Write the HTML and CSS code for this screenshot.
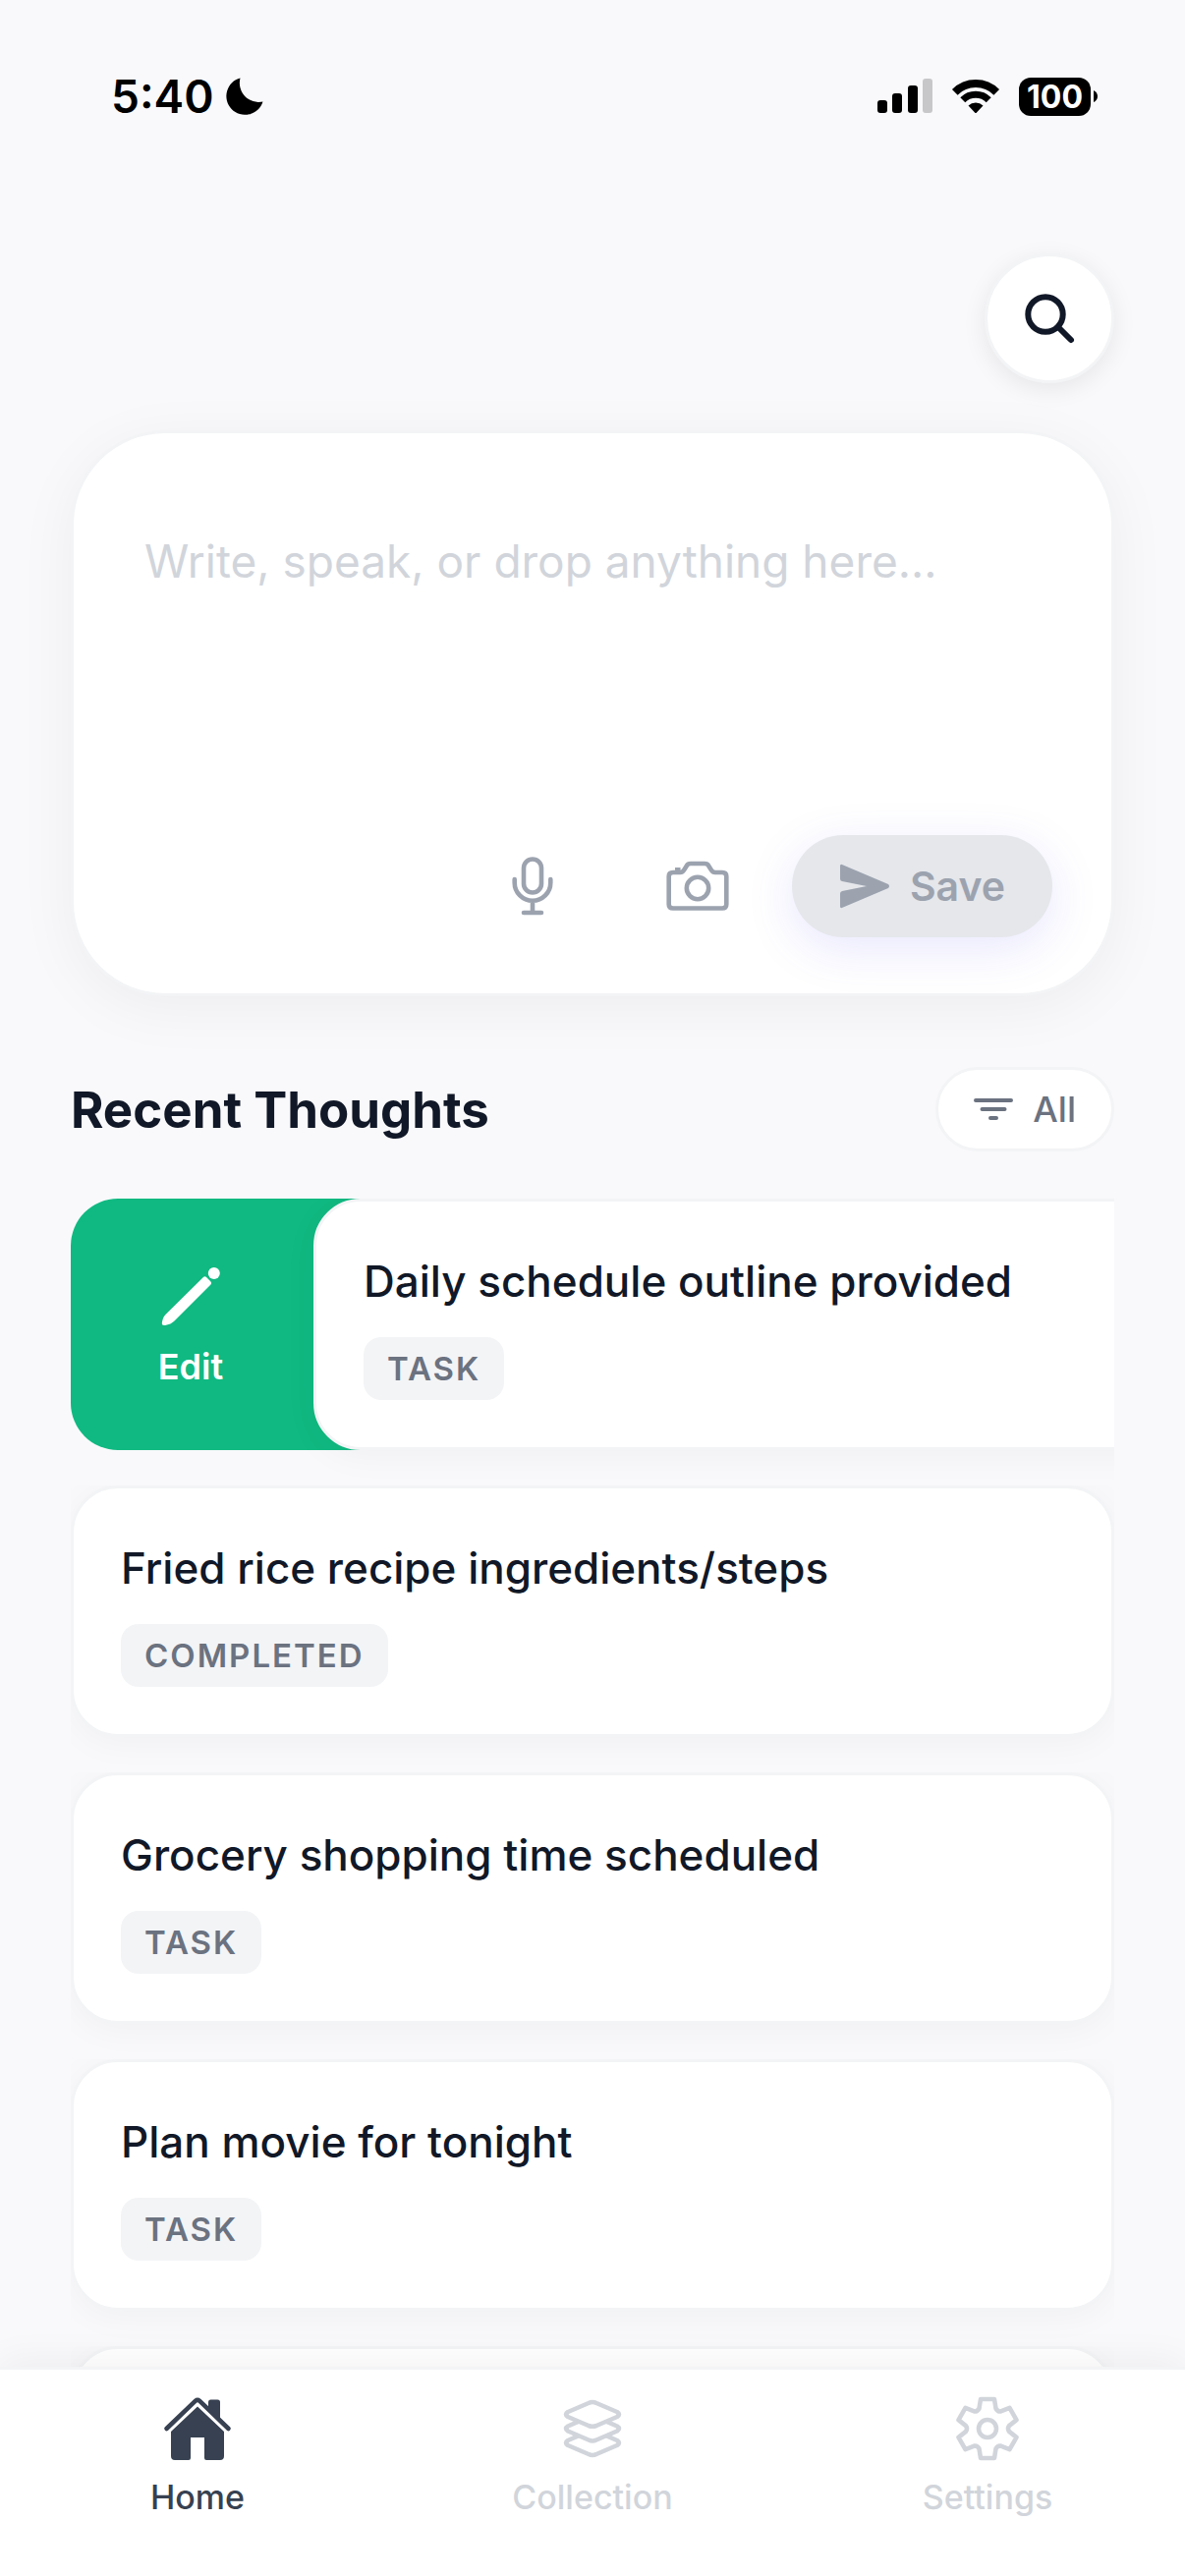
FILE: index.html
```html
<!DOCTYPE html>
<html lang="en">
<head>
    <meta charset="UTF-8">
    <meta name="viewport" content="width=device-width, initial-scale=1.0">
    <title>Thoughts</title>
    <link rel="stylesheet" href="styles.css">
</head>
<body>
    <div class="status-bar">
        <div class="status-left">
            <span class="time">5:40</span>
            <svg class="moon" viewBox="0 0 38 38"><path d="M14.5 .5A19 19 0 1 0 37.5 24.5A19.5 19.5 0 0 1 14.5 .5Z"/></svg>
        </div>
        <div class="status-right">
            <svg class="signal" viewBox="0 0 56 36">
                <rect x="0" y="22" width="10" height="13" rx="3"/>
                <rect x="15" y="15" width="10" height="20" rx="3"/>
                <rect x="31" y="7" width="10" height="28" rx="3"/>
                <rect x="46" y="0" width="10" height="35" rx="3" fill="#c7c7c9"/>
            </svg>
            <svg class="wifi" viewBox="-25 -35 50 36">
                <path d="M-21.2 -21.2A30 30 0 0 1 21.2 -21.2" fill="none" stroke="#000" stroke-width="8"/>
                <path d="M-13.2 -13.2A18.7 18.7 0 0 1 13.2 -13.2" fill="none" stroke="#000" stroke-width="7"/>
                <path d="M-7.5 -7.5A11 11 0 0 1 7.5 -7.5L1 -.5Q0 .5 -1 -.5Z"/>
            </svg>
            <div class="battery">
                <span class="battery-level">100</span>
                <svg class="battery-tip" viewBox="0 0 4 12"><path d="M0 0Q4 2 4 6T0 12Z"/></svg>
            </div>
        </div>
    </div>

    <main class="content">
        <header class="header">
            <button class="search-btn" type="button" aria-label="Search">
                <svg class="icon" viewBox="-36 -36 72 72" fill="none" stroke="#111827" stroke-width="6" stroke-linecap="round">
                    <circle cx="-4" cy="-4" r="17.7"/>
                    <path d="M9.5 9.5L22 22"/>
                </svg>
            </button>
        </header>

        <form class="composer">
            <textarea class="composer-input" aria-label="New thought" placeholder="Write, speak, or drop anything here..."></textarea>
            <div class="composer-actions">
                <button class="icon-btn" type="button" aria-label="Record voice">
                    <svg class="icon" viewBox="-36 -36 72 72" fill="none" stroke="#9ca3af" stroke-width="4.6" stroke-linecap="round">
                        <rect x="-9" y="-27.5" width="18" height="34" rx="9"/>
                        <path d="M-18.3 -7V-3.5A18.3 18.3 0 0 0 18.3 -3.5V-7M0 15V27M-9 27H9"/>
                    </svg>
                </button>
                <button class="icon-btn" type="button" aria-label="Take photo">
                    <svg class="icon" viewBox="-36 -36 72 72" fill="none" stroke="#9ca3af" stroke-width="4.6" stroke-linejoin="round">
                        <path d="M-25 -14H-18Q-15 -14 -13.5 -17L-11 -21Q-10 -23 -7 -23H7Q10 -23 11 -21L13.5 -17Q15 -14 18 -14H25Q29.3 -14 29.3 -10V18.5Q29.3 22.5 25 22.5H-25Q-29.3 22.5 -29.3 18.5V-10Q-29.3 -14 -25 -14Z"/>
                        <path d="M-23 -16.5H-17.5" stroke-width="5"/>
                        <circle cx="0" cy="2" r="11.2"/>
                    </svg>
                </button>
                <button class="save-btn" type="submit">
                    <svg class="send-icon" viewBox="-26 -23 52 46"><path d="M-25 -20.5Q-25 -23 -22.5 -21.8L24 -2Q26 0 24 2L-22.5 21.8Q-25 23 -25 20.5V7.5Q-25 5.5 -23 5L2 0L-23 -5Q-25 -5.5 -25 -7.5Z"/></svg>
                    Save
                </button>
            </div>
        </form>

        <section class="recent">
            <div class="recent-header">
                <h1>Recent Thoughts</h1>
                <button class="filter-btn" type="button">
                    <svg class="filter-icon" viewBox="0 0 40 24" fill="none" stroke="#6b7280" stroke-width="4" stroke-linecap="round">
                        <path d="M2 3H38M8.5 12H31.5M17 21H23"/>
                    </svg>
                    All
                </button>
            </div>

            <ul class="thought-list">
                <li class="thought swiped">
                    <button class="edit-btn" type="button">
                        <svg class="icon" viewBox="-36 -36 72 72" fill="#fff">
                            <circle cx="23.8" cy="-22" r="6"/>
                            <path d="M13.2 -18.2Q14.5 -19.5 15.8 -18.2L20.5 -13.5Q21.8 -12 20.5 -10.500L-16.5 26.500Q-20 30 -26 31Q-30 31.500 -29 27.500Q-28 22 -25 19.500Z"/>
                        </svg>
                        Edit
                    </button>
                    <article class="card">
                        <h2>Daily schedule outline provided</h2>
                        <span class="tag">TASK</span>
                    </article>
                </li>
                <li class="thought">
                    <article class="card">
                        <h2>Fried rice recipe ingredients/steps</h2>
                        <span class="tag">COMPLETED</span>
                    </article>
                </li>
                <li class="thought">
                    <article class="card">
                        <h2>Grocery shopping time scheduled</h2>
                        <span class="tag">TASK</span>
                    </article>
                </li>
                <li class="thought">
                    <article class="card">
                        <h2>Plan movie for tonight</h2>
                        <span class="tag">TASK</span>
                    </article>
                </li>
                <!-- next one peeks out above the tab bar -->
                <li class="thought">
                    <article class="card"></article>
                </li>
            </ul>
        </section>
    </main>

    <nav class="tab-bar">
        <a class="tab active" href="#home">
            <svg class="icon" viewBox="-36 -36 72 72" fill="currentColor">
                <path d="M-31.5 0L-2 -28.3Q0 -30 2 -28.3L31.5 0" fill="none" stroke="currentColor" stroke-width="4.6" stroke-linecap="round"/>
                <path d="M11 -20V-27Q11 -29.5 13.5 -29.5H20.5Q23 -29.5 23 -27V-9Z"/>
                <path d="M0 -22.5L27 3V28Q27 32 23 32H9Q7 32 7 30V9H-7V30Q-7 32 -9 32H-23Q-27 32 -27 28V3Z"/>
            </svg>
            Home
        </a>
        <a class="tab" href="#collection">
            <svg class="icon" viewBox="-36 -36 72 72" fill="none" stroke="currentColor" stroke-width="4.6" stroke-linejoin="round">
                <path d="M-4 -26Q0 -28 4 -26L25 -17Q29 -14.5 25 -12L4 -3Q0 -1.5 -4 -3L-25 -12Q-29 -14.5 -25 -17Z"/>
                <path d="M-14 -7.3L-25 -2.5Q-29 0 -25 2.5L-4 11.5Q0 13.5 4 11.5L25 2.5Q29 0 25 -2.5L14 -7.3"/>
                <path d="M-14 7.2L-25 12Q-29 14.5 -25 17L-4 26Q0 28 4 26L25 17Q29 14.5 25 12L14 7.2"/>
            </svg>
            Collection
        </a>
        <a class="tab" href="#settings">
            <svg class="icon" viewBox="-36 -36 72 72" fill="none" stroke="currentColor" stroke-width="4.6" stroke-linejoin="round">
                <path d="M-7 -30H7L8.5 -20.5Q10.5 -17 13.5 -17.6L22.5 -21.1L29.5 -8.9L22 -2.9Q20 0 22 2.9L29.5 8.9L22.5 21.1L13.5 17.6Q10.5 17 8.5 20.5L7 30H-7L-8.5 20.5Q-10.5 17 -13.5 17.6L-22.5 21.1L-29.5 8.9L-22 2.9Q-20 0 -22 -2.9L-29.5 -8.9L-22.5 -21.1L-13.5 -17.6Q-10.5 -17 -8.5 -20.5Z"/>
                <circle cx="0" cy="0" r="9"/>
            </svg>
            Settings
        </a>
    </nav>
</body>
</html>
```
FILE: styles.css
```css
:root {
    --bg: #f9f9fb;
    --ink: #111827;
    --gray: #6b7280;
    --muted: #9ca3af;
    --light: #d1d5db;
    --line: #f3f4f6;
    --green: #10b981;
}

* {
    box-sizing: border-box;
    margin: 0;
    padding: 0;
}

body {
    font-family: Inter, "Liberation Sans", sans-serif;
    background: var(--bg);
    color: var(--ink);
    height: 100vh;
    display: flex;
    flex-direction: column;
    overflow: hidden;
}

button {
    font-family: inherit;
    border: none;
    background: none;
    cursor: pointer;
}

.icon {
    width: 72px;
    height: 72px;
    display: block;
}

/* Status bar */
.status-bar {
    display: flex;
    justify-content: space-between;
    align-items: center;
    padding: 68px 89px 0 113px;
    color: #000;
}

.status-left,
.status-right {
    display: flex;
    align-items: center;
    height: 60px;
}

.status-left {
    gap: 12px;
}

.status-right {
    gap: 19px;
}

.time {
    font-size: 46px;
    font-weight: 600;
}

.moon {
    width: 38px;
    height: 38px;
}

.signal {
    width: 56px;
    height: 36px;
}

.wifi {
    width: 50px;
    height: 36px;
}

.battery {
    display: flex;
    align-items: center;
    gap: 3px;
}

.battery-level {
    width: 73px;
    height: 39px;
    line-height: 39px;
    border-radius: 12px;
    background: #000;
    color: #fff;
    font-size: 32px;
    font-weight: 700;
    text-align: center;
}

.battery-tip {
    width: 4px;
    height: 12px;
}

.content {
    flex: 1;
    min-height: 0;
    overflow: hidden;
    padding: 130px 72px 0;
}

.header {
    display: flex;
    justify-content: flex-end;
    margin-bottom: 48px;
}

.search-btn {
    width: 132px;
    height: 132px;
    display: flex;
    align-items: center;
    justify-content: center;
    border: 3px solid var(--line);
    border-radius: 50%;
    background: #fff;
    box-shadow: 0 6px 24px rgba(0, 0, 0, 0.08);
}

/* Composer */
.composer {
    background: #fff;
    border: 3px solid var(--line);
    border-radius: 96px;
    padding: 60px 60px 57px;
    margin-bottom: 72px;
    box-shadow: 0 12px 60px rgba(0, 0, 0, 0.05);
}

.composer-input {
    display: block;
    width: 100%;
    height: 349px;
    padding: 36px 12px;
    border: none;
    outline: none;
    resize: none;
    background: none;
    color: var(--ink);
    font-family: inherit;
    font-size: 46px;
    line-height: 68px;
}

.composer-input::placeholder {
    color: var(--light);
}

.composer-actions {
    display: flex;
    justify-content: flex-end;
    align-items: center;
    gap: 24px;
}

.icon-btn {
    width: 144px;
    height: 104px;
    display: flex;
    align-items: center;
    justify-content: center;
}

.save-btn {
    height: 104px;
    padding: 0 48px;
    display: flex;
    align-items: center;
    gap: 20px;
    border-radius: 52px;
    background: #e5e7eb;
    color: var(--muted);
    font-size: 41px;
    font-weight: 600;
    box-shadow: 0 12px 48px rgba(99, 91, 241, 0.15);
}

.send-icon {
    width: 52px;
    height: 46px;
    fill: var(--muted);
}

/* Recent thoughts */
.recent-header {
    display: flex;
    justify-content: space-between;
    align-items: center;
    margin-bottom: 48px;
}

h1 {
    font-size: 51px;
    font-weight: 700;
}

.filter-btn {
    height: 86px;
    padding: 0 36px;
    display: flex;
    align-items: center;
    gap: 20px;
    border: 3px solid var(--line);
    border-radius: 43px;
    background: #fff;
    color: var(--gray);
    font-size: 36px;
    font-weight: 500;
}

.filter-icon {
    width: 40px;
    height: 24px;
}

.thought-list {
    list-style: none;
}

.thought {
    display: flex;
    padding-bottom: 36px;
    overflow: hidden;
}

.card {
    flex: 0 0 100%;
    min-height: 256px;
    padding: 48px;
    border: 3px solid var(--line);
    border-radius: 48px;
    background: #fff;
    box-shadow: 0 6px 36px rgba(0, 0, 0, 0.04);
}

.card h2 {
    font-size: 44px;
    font-weight: 500;
    line-height: 66px;
    margin-bottom: 24px;
}

.tag {
    display: block;
    width: fit-content;
    padding: 0 24px;
    border-radius: 18px;
    background: var(--line);
    color: var(--gray);
    font-size: 33px;
    font-weight: 600;
    line-height: 64px;
    letter-spacing: 2px;
}

/* the card slides over the edit action */
.edit-btn {
    flex: 0 0 295px;
    padding-right: 51px;
    display: flex;
    flex-direction: column;
    align-items: center;
    justify-content: center;
    gap: 14px;
    border-radius: 48px 0 0 48px;
    background: var(--green);
    color: #fff;
    font-size: 36px;
    font-weight: 600;
    line-height: 46px;
}

.swiped .card {
    margin-left: -48px;
}

/* Tab bar */
.tab-bar {
    position: relative;
    display: grid;
    grid-template-columns: repeat(3, 1fr);
    padding: 24px 0 60px;
    border-top: 3px solid var(--line);
    background: #fff;
    box-shadow: 0 -6px 36px rgba(0, 0, 0, 0.05);
}

.tab {
    display: flex;
    flex-direction: column;
    align-items: center;
    gap: 14px;
    color: var(--light);
    font-size: 34px;
    font-weight: 500;
    line-height: 40px;
    text-decoration: none;
}

.tab.active {
    color: #374151;
}
```
